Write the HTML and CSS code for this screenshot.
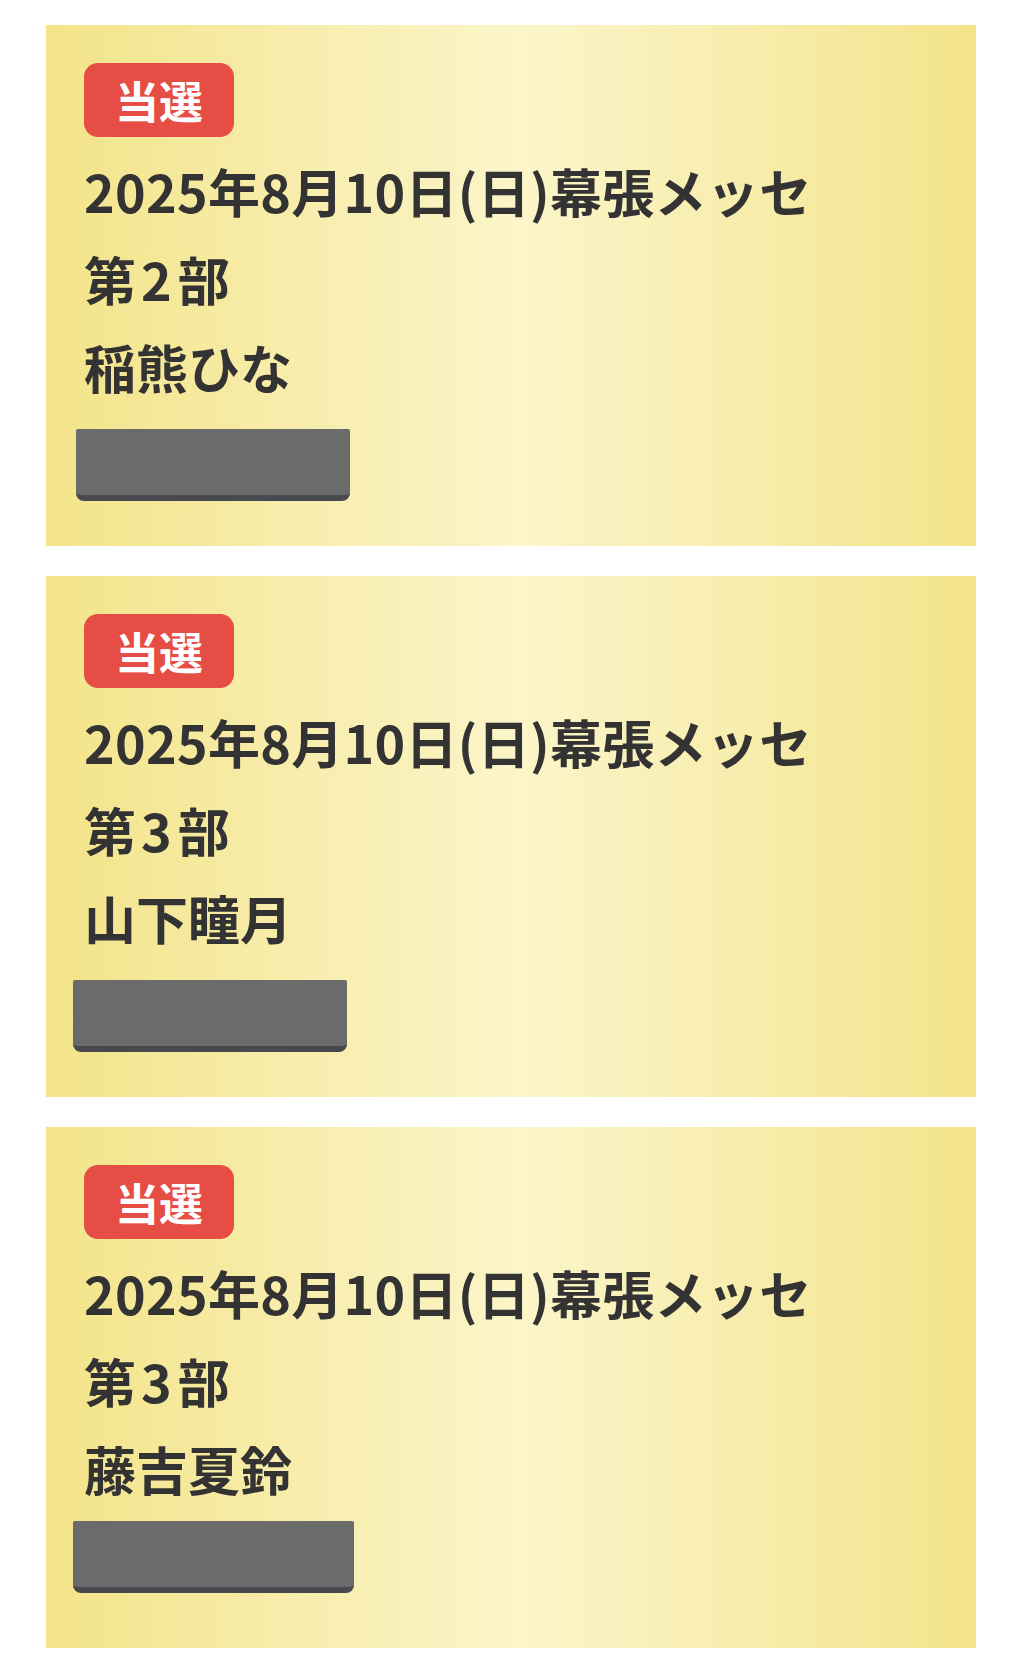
FILE: index.html
```html
<!DOCTYPE html>
<html lang="ja">
<head>
    <meta charset="UTF-8">
    <meta name="viewport" content="width=device-width, initial-scale=1.0">
    <title>抽選結果</title>
    <link rel="stylesheet" href="styles.css">
</head>
<body>

    <div class="list">
        <div class="card">
            <span class="badge">当選</span>
            <p class="line">2025年8月10日(日)幕張メッセ</p>
            <p class="line">第<span class="num">2</span>部</p>
            <p class="line">稲熊ひな</p>
            <div class="hidden-box box-1"></div>
        </div>

        <div class="card">
            <span class="badge">当選</span>
            <p class="line">2025年8月10日(日)幕張メッセ</p>
            <p class="line">第<span class="num">3</span>部</p>
            <p class="line">山下瞳月</p>
            <div class="hidden-box box-2"></div>
        </div>

        <div class="card">
            <span class="badge">当選</span>
            <p class="line">2025年8月10日(日)幕張メッセ</p>
            <p class="line">第<span class="num">3</span>部</p>
            <p class="line">藤吉夏鈴</p>
            <div class="hidden-box box-3"></div>
        </div>
    </div>

</body>
</html>
```

FILE: styles.css
```css
* {
    margin: 0;
    padding: 0;
    box-sizing: border-box;
}

body {
    font-family: 'Noto Sans CJK JP', 'Noto Sans', sans-serif;
    background-color: #fff;
    color: #333;
}

.list {
    display: flex;
    flex-direction: column;
    gap: 30px;
    padding: 25px 53px 11px 46px;
}

.card {
    height: 521px;
    padding: 38px 38px 0 38px;
    background: linear-gradient(to right, #f3e489 0%, #f8eeb0 30%, #fbf5c9 51%, #f8eeb1 72%, #f3e48a 100%);
}

.badge {
    display: inline-block;
    height: 74px;
    padding: 0 31px;
    line-height: 74px;
    font-size: 44px;
    font-weight: 700;
    color: #fff;
    background-color: #e64d45;
    border-radius: 14px;
}

.line {
    font-size: 52px;
    font-weight: 700;
    line-height: 88px;
    white-space: nowrap;
}

.line:first-of-type {
    margin-top: 10px;
    letter-spacing: 0.3px;
}

.num {
    margin: 0 6px 0 5px;
}

.hidden-box {
    height: 72px;
    margin-top: 18px;
    background-color: #6b6b6c;
    border-bottom: 6px solid #48484f;
    border-radius: 2px 2px 8px 8px;
}

.box-1 {
    width: 274px;
    margin-left: -8px;
}

.box-2 {
    width: 274px;
    margin-left: -11px;
}

.box-3 {
    width: 281px;
    margin-left: -11px;
    margin-top: 8px;
}
```
